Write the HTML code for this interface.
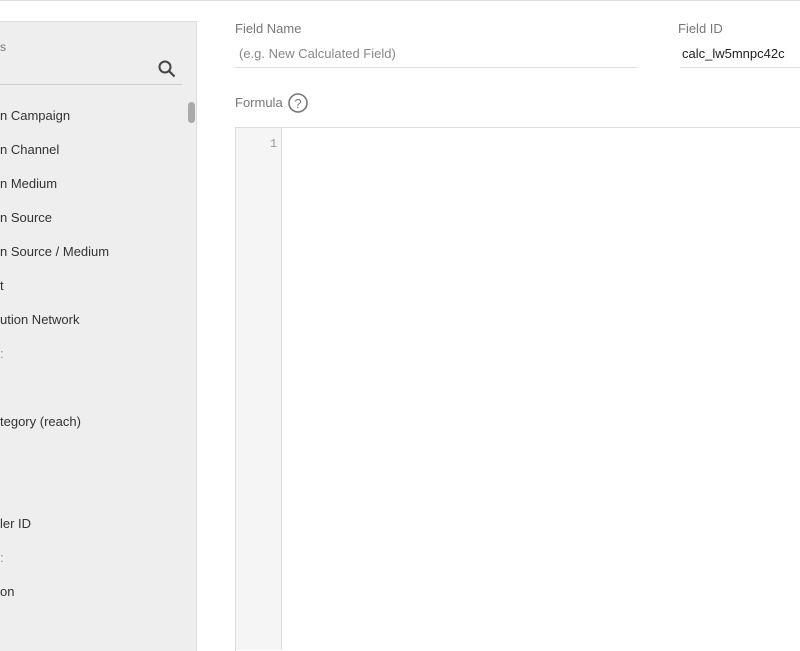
<!DOCTYPE html>
<html><head><style>
body{margin:0;width:800px;height:650px;overflow:hidden;background:#fff;font-family:"Liberation Sans",sans-serif;position:relative}
.a{position:absolute}
.it{position:absolute;left:0;font-size:13px;color:#333;white-space:nowrap}
</style></head><body>
<div class="a" style="left:0;top:0;width:800px;height:1px;background:#ddd"></div>
<div class="a" style="left:0;top:21px;width:196px;height:629px;background:#eee;border-top:1px solid #ddd;border-right:1px solid #ddd"></div>
<div class="a" style="left:0;top:40px;font-size:12px;color:#777">s</div>
<svg class="a" style="left:157px;top:59px" width="20" height="20" viewBox="0 0 20 20"><circle cx="8" cy="8" r="5.5" fill="none" stroke="#444" stroke-width="2"/><path d="M12 12l5.5 5.5" stroke="#444" stroke-width="2.2"/></svg>
<div class="a" style="left:0;top:84px;width:182px;height:1px;background:#ccc"></div>
<div class="a" style="left:188px;top:102px;width:7px;height:21px;border-radius:4px;background:#aaa"></div>
<div class="it" style="top:108px">n Campaign</div>
<div class="it" style="top:142px">n Channel</div>
<div class="it" style="top:176px">n Medium</div>
<div class="it" style="top:210px">n Source</div>
<div class="it" style="top:244px">n Source / Medium</div>
<div class="it" style="top:278px">t</div>
<div class="it" style="top:312px">ution Network</div>
<div class="it" style="top:346px;color:#4a9fe0">:</div>
<div class="it" style="top:414px">tegory (reach)</div>
<div class="it" style="top:516px">ler ID</div>
<div class="it" style="top:550px;color:#4a9fe0">:</div>
<div class="it" style="top:584px">on</div>
<div class="a" style="left:235px;top:21px;font-size:13px;color:#777">Field Name</div>
<div class="a" style="left:239px;top:46px;font-size:13px;color:#888">(e.g. New Calculated Field)</div>
<div class="a" style="left:235px;top:67px;width:402px;height:1px;background:#ddd"></div>
<div class="a" style="left:678px;top:21px;font-size:13px;color:#777">Field ID</div>
<div class="a" style="left:682px;top:46px;font-size:13px;color:#222">calc_lw5mnpc42c</div>
<div class="a" style="left:680px;top:67px;width:120px;height:1px;background:#ddd"></div>
<div class="a" style="left:235px;top:95px;font-size:13px;color:#777">Formula</div>
<svg class="a" style="left:287px;top:92px" width="22" height="22" viewBox="0 0 22 22"><circle cx="11" cy="11" r="9" fill="none" stroke="#777" stroke-width="1.6"/><text x="11" y="16" font-size="13" text-anchor="middle" fill="#777" font-family="Liberation Sans">?</text></svg>
<div class="a" style="left:235px;top:127px;width:565px;height:523px;border-top:1px solid #ddd;border-left:1px solid #ddd"></div>
<div class="a" style="left:236px;top:128px;width:45px;height:522px;background:#f5f5f5;border-right:1px solid #ddd"></div>
<div class="a" style="left:270px;top:137px;font-size:12px;color:#999;font-family:'Liberation Mono',monospace">1</div>
</body></html>
